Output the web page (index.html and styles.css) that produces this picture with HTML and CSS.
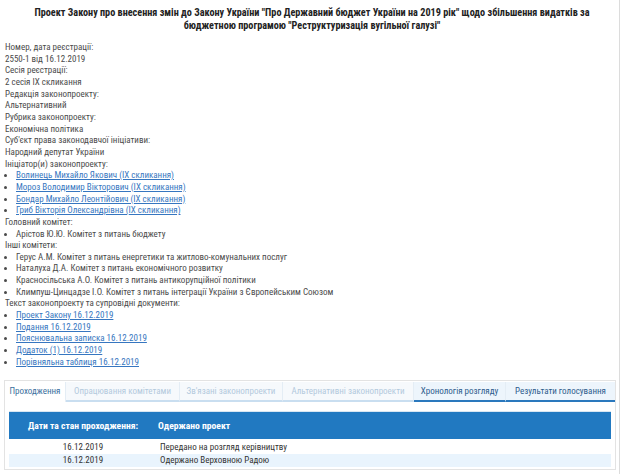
FILE: index.html
```html
<!DOCTYPE html>
<html lang="uk">
<head>
<meta charset="utf-8">
<link rel="stylesheet" href="styles.css">
</head>
<body>
<div class="page">
  <h1 class="title">Проект Закону про внесення змін до Закону України "Про Державний бюджет України на 2019 рік" щодо збільшення видатків за бюджетною програмою "Реструктуризація вугільної галузі"</h1>
  <div class="info">
    <div>Номер, дата реєстрації:</div>
    <div>2550-1 від 16.12.2019</div>
    <div>Сесія реєстрації:</div>
    <div>2 сесія IX скликання</div>
    <div>Редакція законопроекту:</div>
    <div>Альтернативний</div>
    <div>Рубрика законопроекту:</div>
    <div>Економічна політика</div>
    <div>Суб'єкт права законодавчої ініціативи:</div>
    <div>Народний депутат України</div>
    <div>Ініціатор(и) законопроекту:</div>
    <ul class="list">
      <li><a href="#">Волинець Михайло Якович (IX скликання)</a></li>
      <li><a href="#">Мороз Володимир Вікторович (IX скликання)</a></li>
      <li><a href="#">Бондар Михайло Леонтійович (IX скликання)</a></li>
      <li><a href="#">Гриб Вікторія Олександрівна (IX скликання)</a></li>
    </ul>
    <div>Головний комітет:</div>
    <ul class="list">
      <li>Арістов Ю.Ю. Комітет з питань бюджету</li>
    </ul>
    <div>Інші комітети:</div>
    <ul class="list">
      <li>Герус А.М. Комітет з питань енергетики та житлово-комунальних послуг</li>
      <li>Наталуха Д.А. Комітет з питань економічного розвитку</li>
      <li>Красносільська А.О. Комітет з питань антикорупційної політики</li>
      <li>Климпуш-Цинцадзе І.О. Комітет з питань інтеграції України з Європейським Союзом</li>
    </ul>
    <div>Текст законопроекту та супровідні документи:</div>
    <ul class="list">
      <li><a href="#">Проект Закону 16.12.2019</a></li>
      <li><a href="#">Подання 16.12.2019</a></li>
      <li><a href="#">Пояснювальна записка 16.12.2019</a></li>
      <li><a href="#">Додаток (1) 16.12.2019</a></li>
      <li><a href="#">Порівняльна таблиця 16.12.2019</a></li>
    </ul>
  </div>
  <div class="panel">
    <div class="tabs">
      <div class="tab active" style="width:61px">Проходження</div>
      <div class="tab disabled" style="width:114px">Опрацювання комітетами</div>
      <div class="tab disabled" style="width:103px">Зв'язані законопроекти</div>
      <div class="tab disabled" style="width:131px">Альтернативні законопроекти</div>
      <div class="tab enabled" style="width:92px">Хронологія розгляду</div>
      <div class="tab enabled last">Результати голосування</div>
    </div>
    <div class="content">
      <table class="grid">
        <thead>
          <tr><th class="c1">Дати та стан проходження:</th><th class="c2">Одержано проект</th></tr>
        </thead>
        <tbody>
          <tr><td class="c1">16.12.2019</td><td class="c2">Передано на розгляд керівництву</td></tr>
          <tr class="alt"><td class="c1">16.12.2019</td><td class="c2">Одержано Верховною Радою</td></tr>
        </tbody>
      </table>
    </div>
  </div>
</div>
</body>
</html>
```
FILE: styles.css
```css
html, body {
  margin: 0;
  padding: 0;
  background: #fff;
}
body {
  font-family: "Roboto Condensed", "Liberation Sans", Arial, sans-serif;
  color: #333;
  overflow: hidden;
  height: 474px;
}
.page {
  width: 614px;
  padding: 0 0 0 5px;
  border-right: 1px solid #dcdcdc;
  height: 474px;
}
.title {
  margin: 0;
  padding: 6px 18px 10px;
  font-size: 10.2px;
  line-height: 13px;
  font-weight: bold;
  text-align: center;
  color: #222;
}
.info {
  font-size: 9px;
  line-height: 11.65px;
  color: #4a4a4a;
}
.list {
  margin: 0;
  padding: 0 0 0 11px;
  list-style: disc;
}
.list a {
  color: #3676c0;
  text-decoration: underline;
}
.panel {
  margin: 12px 0 0 -1px;
  width: 610px;
  border: 1px solid #e3e3e3;
  padding: 1px 0 2px 0;
}
.tabs {
  display: flex;
  height: 20px;
  font-size: 9px;
}
.tab {
  box-sizing: border-box;
  height: 20px;
  line-height: 18px;
  text-align: center;
  border-right: 1px solid #e4edf5;
  white-space: nowrap;
}
.tab.active {
  background: #fff;
  color: #3b6f9e;
}
.tab.disabled {
  background: #f6f9fc;
  color: #b3c9dd;
  border-bottom: 2px solid #c9def0;
}
.tab.enabled {
  background: #edf5fc;
  color: #2d5c8c;
  border-bottom: 2px solid #2a78bd;
}
.tab.last {
  flex: 1;
  border-right: none;
}
.content {
  padding: 9px 3px 0 4px;
}
.grid {
  width: 602px;
  border-collapse: collapse;
  font-size: 9px;
}
.grid thead th {
  background: #2179c1;
  color: #fff;
  font-weight: bold;
  font-size: 9.6px;
  height: 27px;
  padding: 0;
  border-top: 1px solid #d8e6f2;
}
.grid th.c1 {
  width: 148px;
  text-align: center;
}
.grid th.c2 {
  text-align: left;
  padding-left: 1px;
}
.grid td {
  height: 13px;
  padding: 0;
  line-height: 13px;
  color: #333;
}
.grid tbody tr:first-child td {
  padding-top: 2px;
}
.grid td.c1 {
  text-align: center;
}
.grid td.c2 {
  padding-left: 3px;
}
.grid tr.alt td {
  background: #e9f4fd;
}
```
